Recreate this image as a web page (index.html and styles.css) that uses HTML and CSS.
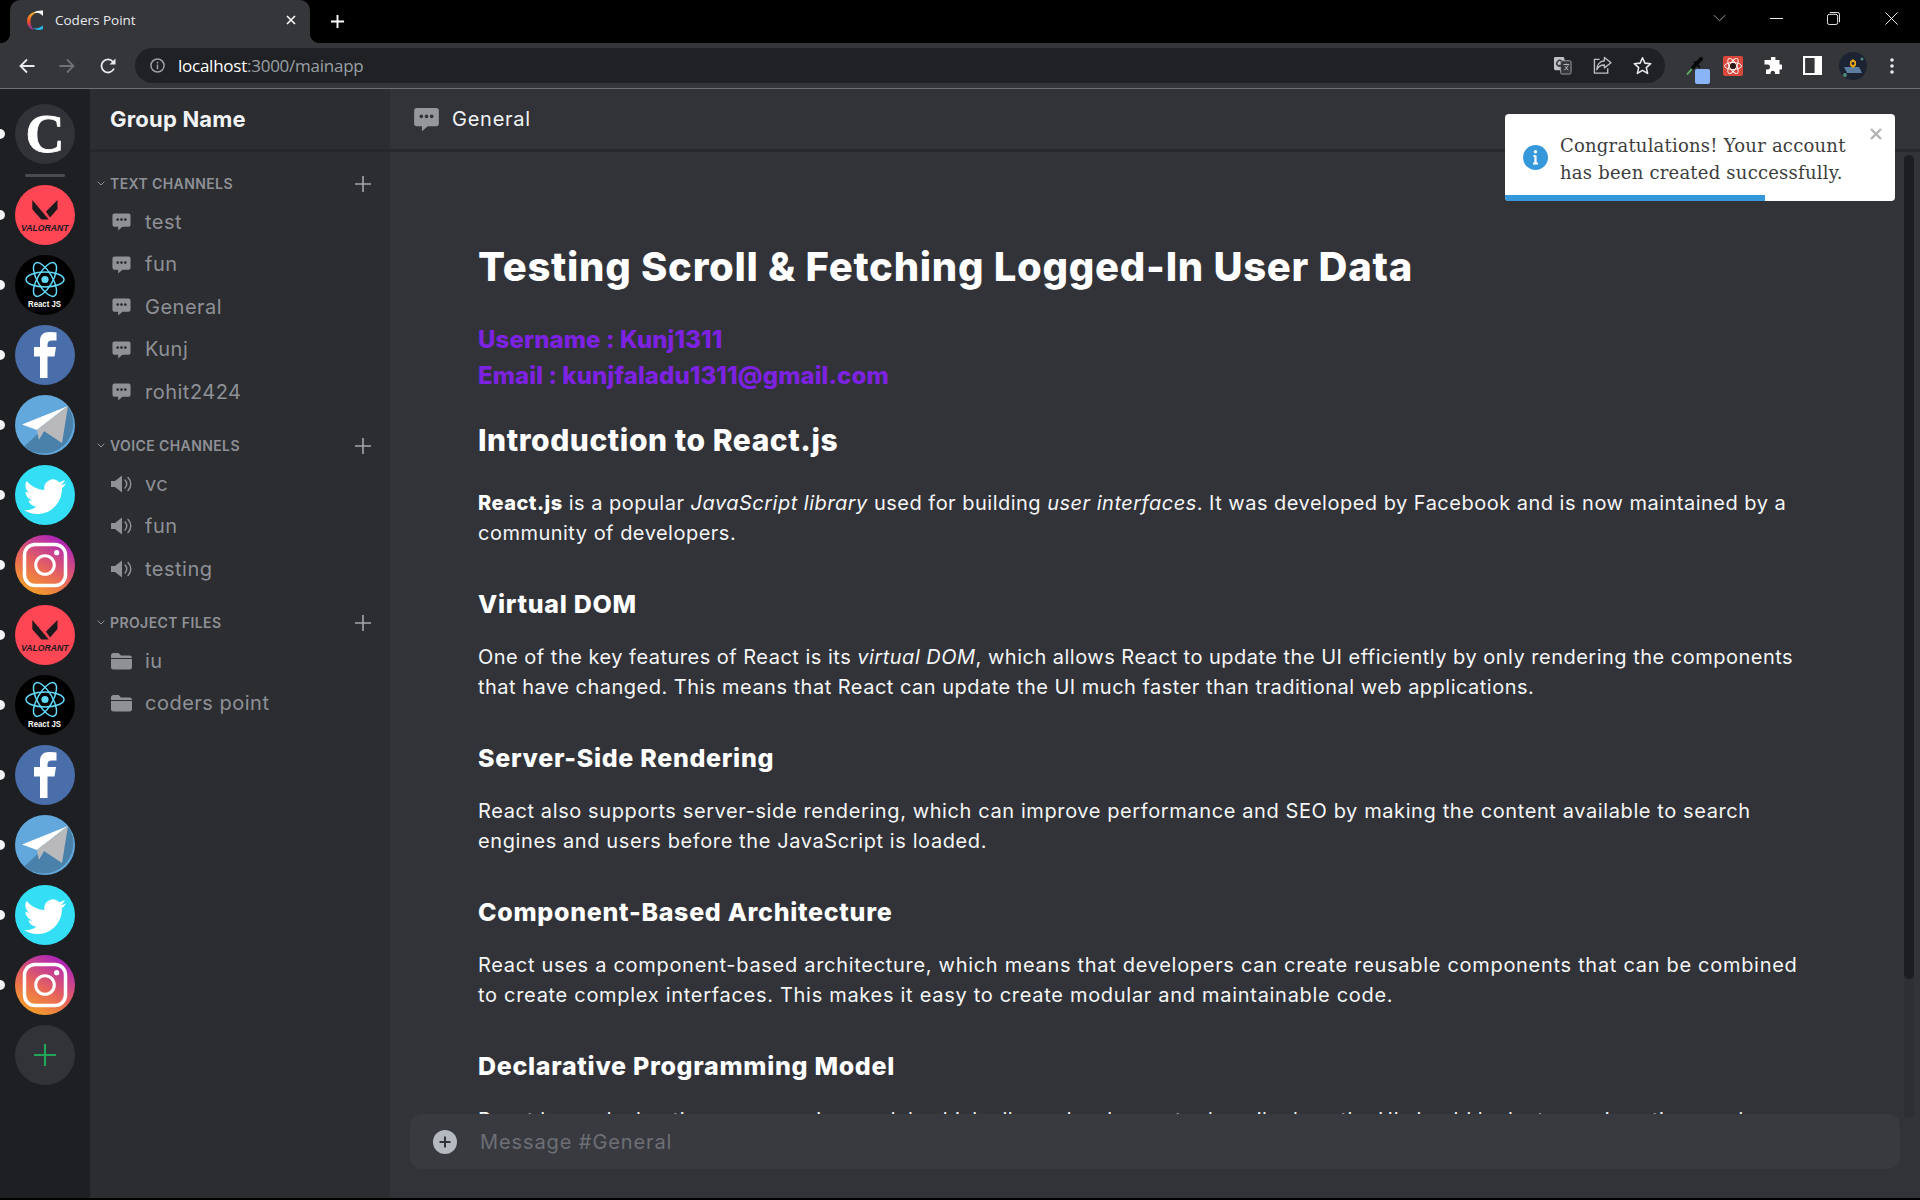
FILE: index.html
```html
<!DOCTYPE html>
<html lang="en">
<head>
<meta charset="utf-8">
<title>Coders Point</title>
<link rel="stylesheet" href="styles.css">
</head>
<body>
<svg class="defs" width="0" height="0" aria-hidden="true">
  <defs>
    <linearGradient id="ig" x1="0.2" y1="1" x2="0.75" y2="0">
      <stop offset="0" stop-color="#f5a623"/><stop offset="0.45" stop-color="#e8655a"/><stop offset="1" stop-color="#a81ec4"/>
    </linearGradient>
    <linearGradient id="fav" x1="0" y1="0" x2="0" y2="1">
      <stop offset="0" stop-color="#f6c22a"/><stop offset="0.55" stop-color="#ea4a26"/><stop offset="1" stop-color="#8a2fc0"/>
    </linearGradient>
    <symbol id="logo-val" viewBox="0 0 60 60">
      <circle cx="30" cy="30" r="30" fill="#ff4655"/>
      <path d="M17.300 15v9.300l9 10.300h7.500zM42.500 15L31 26.500l4 6 7.500-8.500z" fill="#1d1a1e"/>
      <text x="6" y="45.500" class="val-text" textLength="47.500" lengthAdjust="spacingAndGlyphs">VALORANT</text>
    </symbol>
    <symbol id="logo-react" viewBox="0 0 60 60">
      <circle cx="30" cy="30" r="30" fill="#000"/>
      <g fill="none" stroke="#61dafb" stroke-width="1.500">
        <ellipse cx="30" cy="24.500" rx="19" ry="7.500"/>
        <ellipse cx="30" cy="24.500" rx="19" ry="7.500" transform="rotate(60 30 24.500)"/>
        <ellipse cx="30" cy="24.500" rx="19" ry="7.500" transform="rotate(120 30 24.500)"/>
      </g>
      <circle cx="30" cy="24.500" r="3.600" fill="#61dafb"/>
      <text x="13" y="51.500" class="react-text" textLength="33" lengthAdjust="spacingAndGlyphs">React JS</text>
    </symbol>
    <symbol id="logo-fb" viewBox="0 0 60 60">
      <circle cx="30" cy="30" r="30" fill="#4a6ea9"/>
      <path d="M25 53V31.500h-6V22h6v-6c0-6 3.500-9 9-9 2.500 0 5.500.2 7.500.5v8H37c-3 0-4.500 1.200-4.500 4V22H41l-1.500 9.500h-7V53z" fill="#fff"/>
    </symbol>
    <symbol id="logo-tg" viewBox="0 0 60 60">
      <circle cx="30" cy="30" r="30" fill="#62a8dc"/>
      <path d="M53 11.500A30 30 0 0 1 9 51.500z" fill="#4a81aa"/>
      <path d="M7 29.500L53 11 22 35z" fill="#fff"/>
      <path d="M53 11L22 35l2 9.500 5-8.500z" fill="#7db7e2"/>
      <path d="M53 11l-6 37-18-12-5 8.500-2-9.500z" fill="#b9b9bb"/>
    </symbol>
    <symbol id="logo-tw" viewBox="0 0 60 60">
      <circle cx="30" cy="30" r="30" fill="#33dff5"/>
      <path d="M51 18.500c-1.600.7-3.300 1.200-5 1.400 1.800-1.100 3.200-2.800 3.800-4.800-1.700 1-3.500 1.700-5.500 2.100a8.700 8.700 0 0 0-14.800 7.900c-7.200-.4-13.600-3.800-17.900-9-2.300 4-1.200 9 2.700 11.600-1.400 0-2.700-.4-3.900-1.100 0 4.200 3 7.800 7 8.600-1.300.4-2.600.4-3.900.2 1.100 3.500 4.300 6 8.100 6A17.500 17.500 0 0 1 9 45.100a24.700 24.700 0 0 0 13.300 3.900c16.100 0 25.200-13.600 24.600-25.800 1.700-1.200 3.100-2.800 4.100-4.700z" fill="#fff"/>
    </symbol>
    <symbol id="logo-ig" viewBox="0 0 60 60">
      <circle cx="30" cy="30" r="30" fill="url(#ig)"/>
      <rect x="9.500" y="9.500" width="41" height="41" rx="10.500" fill="none" stroke="#fff" stroke-width="3.500"/>
      <circle cx="30" cy="30" r="9.300" fill="none" stroke="#fff" stroke-width="3"/>
      <circle cx="41.700" cy="17.700" r="2.600" fill="#fff"/>
    </symbol>
    <symbol id="i-chat" viewBox="0 0 20 20">
      <path d="M2.500 1.500h15a2 2 0 0 1 2 2v10a2 2 0 0 1-2 2H11l-4.500 4v-4h-4a2 2 0 0 1-2-2v-10a2 2 0 0 1 2-2z" fill="currentColor"/>
      <g class="chat-dots"><circle cx="6" cy="8" r="1.400"/><circle cx="10" cy="8" r="1.400"/><circle cx="14" cy="8" r="1.400"/></g>
    </symbol>
    <symbol id="i-vol" viewBox="0 0 21 18">
      <path d="M0 6h4l7-5.500v17L4 12H0z" fill="currentColor"/>
      <path d="M14 5a5.500 5.500 0 0 1 0 8M17 2.500a9 9 0 0 1 0 13" fill="none" stroke="currentColor" stroke-width="1.500" stroke-linecap="round"/>
    </symbol>
    <symbol id="i-folder" viewBox="0 0 21 17">
      <path d="M0 3a2.500 2.500 0 0 1 2.500-2.500h5L10 3h8.500A2.500 2.500 0 0 1 21 5.500H0z" fill="currentColor"/>
      <path d="M0 6.500h21v8a2.500 2.500 0 0 1-2.500 2.500h-16A2.500 2.500 0 0 1 0 14.500z" fill="currentColor"/>
    </symbol>
    <symbol id="i-plus" viewBox="0 0 16 16">
      <path d="M8 0v16M0 8h16" fill="none" stroke="currentColor" stroke-width="1.600"/>
    </symbol>
    <symbol id="i-chev" viewBox="0 0 8 5">
      <path d="M.7.7L4 4l3.300-3.300" fill="none" stroke="currentColor" stroke-width="1"/>
    </symbol>
  </defs>
</svg>

<header class="browser">
  <div class="tabstrip">
    <div class="tab">
      <svg class="favicon" viewBox="0 0 16 20"><path d="M13 1.500C5 1 0 5 0 11c0 5 3 8 7 9-3-3-3.500-6-3.500-9 0-5 3.500-8.500 9.500-9.500z" fill="url(#fav)"/><path d="M8 1.800C11 .5 14 .5 16 .5V6c-2-2.500-5-4-8.500-3z" fill="#fff"/><path d="M5 17c2 2 6 2 11-1.500V19c-3 1.500-8 1.500-11-2z" fill="#28b5ea"/></svg>
      <span class="tab-title">Coders Point</span>
      <svg class="tab-close" viewBox="0 0 10 10"><path d="M1 1l8 8M9 1l-8 8" stroke="#fff" stroke-width="1.600" fill="none"/></svg>
    </div>
    <svg class="new-tab" viewBox="0 0 16 16"><path d="M8 1v14M1 8h14" stroke="#fff" stroke-width="2" fill="none"/></svg>
    <div class="win-controls">
      <svg class="wc wc-chev" viewBox="0 0 14 8"><path d="M1 1l6 6 6-6" stroke="#a6a6a6" stroke-width="1" fill="none"/></svg>
      <svg class="wc wc-min" viewBox="0 0 14 14"><path d="M0 7h14" stroke="#fff" stroke-width="1" fill="none"/></svg>
      <svg class="wc wc-max" viewBox="0 0 14 14"><rect x=".5" y="2.500" width="11" height="11" rx="2" stroke="#fff" fill="none"/><path d="M3 .5h8.500a2 2 0 0 1 2 2V11" stroke="#fff" fill="none"/></svg>
      <svg class="wc wc-close" viewBox="0 0 14 14"><path d="M.5.5l13 13M13.500.5l-13 13" stroke="#fff" stroke-width="1" fill="none"/></svg>
    </div>
  </div>
  <div class="toolbar">
    <svg class="nav-ico" viewBox="0 0 16 16"><path d="M15.500 8H1.500M8 1.500L1.500 8 8 14.500" stroke="#e8eaed" stroke-width="1.800" fill="none"/></svg>
    <svg class="nav-ico" viewBox="0 0 16 16"><path d="M.5 8h14M8 1.500L14.500 8 8 14.500" stroke="#6f7175" stroke-width="1.800" fill="none"/></svg>
    <svg class="nav-ico reload" viewBox="0 0 16 16"><path d="M14 10.500A6.500 6.500 0 1 1 13 3.800" stroke="#e8eaed" stroke-width="1.800" fill="none"/><path d="M15.500.5v6h-6z" fill="#e8eaed"/></svg>
    <div class="omnibox">
      <svg class="info-ico" viewBox="0 0 16 16"><circle cx="8" cy="8" r="7" stroke="#9aa0a6" stroke-width="1.600" fill="none"/><path d="M8 7v5M8 4v1.800" stroke="#9aa0a6" stroke-width="1.600"/></svg>
      <span class="url"><span class="url-host">localhost</span>:3000/mainapp</span>
      <div class="omni-actions">
        <svg class="omni-ico" viewBox="0 0 20 20"><rect x="1" y="1" width="11" height="14" rx="1.500" fill="#bdc1c6"/><rect x="8" y="5" width="11" height="14" rx="1.500" fill="#35363a" stroke="#9aa0a6"/><path d="M9 5.500A3 3 0 1 0 9 10H6.500" stroke="#35363a" stroke-width="1.500" fill="none"/><path d="M11 9h6M14 8v1M12 15l4-5M13 11l3 4" stroke="#bdc1c6" fill="none"/></svg>
        <svg class="omni-ico" viewBox="0 0 20 20"><path d="M7 3.500H1.500v14.500h14v-5" stroke="#bdc1c6" stroke-width="1.400" fill="none"/><path d="M12 1.500L19 7l-7 5.500V9.500c-4 0-6.500 1.500-8 5 0-5 3-9 8-9.500z" stroke="#bdc1c6" stroke-width="1.400" fill="none" stroke-linejoin="round"/></svg>
        <svg class="omni-ico" viewBox="0 0 20 20"><path d="M10 1.800l2.500 5.700 6.200.6-4.700 4.100 1.400 6.100-5.400-3.200-5.400 3.200 1.400-6.100L1.300 8.100l6.200-.6z" stroke="#e8eaed" stroke-width="1.600" fill="none" stroke-linejoin="round"/></svg>
      </div>
    </div>
    <div class="extensions">
      <svg class="ext-dropper" viewBox="0 0 24 27"><path d="M1 17.500L8 9.500" stroke="#5cb860" stroke-width="1.800" fill="none"/><path d="M7 10.500L15 2" stroke="#08090a" stroke-width="4" fill="none" stroke-linecap="round"/><path d="M8 4.500l6 6" stroke="#08090a" stroke-width="2" fill="none"/><rect x="9" y="12" width="15" height="15" rx="2" fill="#8ab4f8"/></svg>
      <svg class="ext-react" viewBox="0 0 20 20"><rect width="20" height="20" rx="2" fill="#d9483b"/><g stroke="#fff" fill="none" stroke-width=".9"><ellipse cx="10" cy="10" rx="8.500" ry="3.500"/><ellipse cx="10" cy="10" rx="8.500" ry="3.500" transform="rotate(60 10 10)"/><ellipse cx="10" cy="10" rx="8.500" ry="3.500" transform="rotate(120 10 10)"/></g><circle cx="10" cy="10" r="3" fill="#2b1a18"/></svg>
      <svg class="ext-puzzle" viewBox="0 0 18 18"><path d="M7 1a2.200 2.200 0 0 1 4.400 0V3H15.500v4.500h1.500a2.500 2.500 0 0 1 0 5h-1.500V17H11v-1.500a2.300 2.300 0 0 0-4.500 0V17H2v-4.500h1.500a2.500 2.500 0 0 0 0-5H.5V3H7z" fill="#fff"/></svg>
      <svg class="ext-panel" viewBox="0 0 18 18"><path fill-rule="evenodd" d="M0 0h18v18H0zM2 2v14h9V2z" fill="#fff"/></svg>
      <svg class="ext-avatar" viewBox="0 0 28 28"><circle cx="14" cy="14" r="14" fill="#1c2433"/><path d="M5 15h15l3 6H8z" fill="#5a7da0"/><path d="M14 7l3 2.500v4L14 16l-3-2.500v-4z" fill="#e6a817"/><circle cx="14" cy="11.500" r="1.400" fill="#1c2433"/><circle cx="23" cy="7" r="1.500" fill="#4f8a78"/><circle cx="6" cy="23" r="2" fill="#4f8a78"/></svg>
      <svg class="ext-dots" viewBox="0 0 4 16"><circle cx="2" cy="2" r="1.800" fill="#e8eaed"/><circle cx="2" cy="8" r="1.800" fill="#e8eaed"/><circle cx="2" cy="14" r="1.800" fill="#e8eaed"/></svg>
    </div>
  </div>
</header>

<div class="app">
  <nav class="rail">
    <div class="rail-item"><div class="brand-c">C</div></div>
    <div class="rail-sep"></div>
    <div class="rail-item"><svg class="logo"><use href="#logo-val"/></svg></div>
    <div class="rail-item"><svg class="logo"><use href="#logo-react"/></svg></div>
    <div class="rail-item"><svg class="logo"><use href="#logo-fb"/></svg></div>
    <div class="rail-item"><svg class="logo"><use href="#logo-tg"/></svg></div>
    <div class="rail-item"><svg class="logo"><use href="#logo-tw"/></svg></div>
    <div class="rail-item"><svg class="logo"><use href="#logo-ig"/></svg></div>
    <div class="rail-item"><svg class="logo"><use href="#logo-val"/></svg></div>
    <div class="rail-item"><svg class="logo"><use href="#logo-react"/></svg></div>
    <div class="rail-item"><svg class="logo"><use href="#logo-fb"/></svg></div>
    <div class="rail-item"><svg class="logo"><use href="#logo-tg"/></svg></div>
    <div class="rail-item"><svg class="logo"><use href="#logo-tw"/></svg></div>
    <div class="rail-item"><svg class="logo"><use href="#logo-ig"/></svg></div>
    <div class="rail-add"><svg class="rail-add-ico"><use href="#i-plus"/></svg></div>
  </nav>

  <aside class="sidebar">
    <div class="side-head">Group Name</div>
    <section class="cat">
      <div class="cat-head"><svg class="chev"><use href="#i-chev"/></svg><span class="cat-name">TEXT CHANNELS</span><svg class="cat-plus"><use href="#i-plus"/></svg></div>
      <div class="chan"><svg class="chan-ico"><use href="#i-chat"/></svg><span>test</span></div>
      <div class="chan"><svg class="chan-ico"><use href="#i-chat"/></svg><span>fun</span></div>
      <div class="chan"><svg class="chan-ico"><use href="#i-chat"/></svg><span>General</span></div>
      <div class="chan"><svg class="chan-ico"><use href="#i-chat"/></svg><span>Kunj</span></div>
      <div class="chan"><svg class="chan-ico"><use href="#i-chat"/></svg><span>rohit2424</span></div>
    </section>
    <section class="cat">
      <div class="cat-head"><svg class="chev"><use href="#i-chev"/></svg><span class="cat-name">VOICE CHANNELS</span><svg class="cat-plus"><use href="#i-plus"/></svg></div>
      <div class="chan"><svg class="chan-ico vol"><use href="#i-vol"/></svg><span>vc</span></div>
      <div class="chan"><svg class="chan-ico vol"><use href="#i-vol"/></svg><span>fun</span></div>
      <div class="chan"><svg class="chan-ico vol"><use href="#i-vol"/></svg><span>testing</span></div>
    </section>
    <section class="cat">
      <div class="cat-head"><svg class="chev"><use href="#i-chev"/></svg><span class="cat-name">PROJECT FILES</span><svg class="cat-plus"><use href="#i-plus"/></svg></div>
      <div class="chan"><svg class="chan-ico vol"><use href="#i-folder"/></svg><span>iu</span></div>
      <div class="chan"><svg class="chan-ico vol"><use href="#i-folder"/></svg><span>coders point</span></div>
    </section>
  </aside>

  <main class="main">
    <div class="main-head"><svg class="head-ico"><use href="#i-chat"/></svg><span class="head-title">General</span></div>
    <article class="content">
      <h1>Testing Scroll &amp; Fetching Logged-In User Data</h1>
      <div class="who"><div>Username : Kunj1311</div><div>Email : kunjfaladu1311@gmail.com</div></div>
      <h2>Introduction to React.js</h2>
      <p><strong>React.js</strong> is a popular <em>JavaScript library</em> used for building <em>user interfaces</em>. It was developed by Facebook and is now maintained by a<br>community of developers.</p>
      <h3>Virtual DOM</h3>
      <p>One of the key features of React is its <em>virtual DOM</em>, which allows React to update the UI efficiently by only rendering the components<br>that have changed. This means that React can update the UI much faster than traditional web applications.</p>
      <h3>Server-Side Rendering</h3>
      <p class="loose">React also supports server-side rendering, which can improve performance and SEO by making the content available to search<br>engines and users before the JavaScript is loaded.</p>
      <h3>Component-Based Architecture</h3>
      <p class="looser">React uses a component-based architecture, which means that developers can create reusable components that can be combined<br>to create complex interfaces. This makes it easy to create modular and maintainable code.</p>
      <h3>Declarative Programming Model</h3>
      <p>React has a declarative programming model, which allows developers to describe how the UI should look at any given time, and</p>
    </article>
    <div class="scroll-track"><div class="scroll-thumb"></div></div>
    <div class="composer">
      <svg class="composer-ico" viewBox="0 0 24 24"><circle cx="12" cy="12" r="12" fill="#b5bac1"/><path d="M12 6.500v11M6.500 12h11" stroke="#313338" stroke-width="2"/></svg>
      <span class="composer-text">Message #General</span>
    </div>
    <div class="toast">
      <div class="toast-body">
        <svg class="toast-ico" viewBox="0 0 25 25"><circle cx="12.500" cy="12.500" r="12.500" fill="#3498db"/><path d="M12.500 10.500v8M10 18.500h5M10.500 11h2" stroke="#fff" stroke-width="2.200" fill="none"/><circle cx="12.500" cy="6.800" r="1.700" fill="#fff"/></svg>
        <div class="toast-text">Congratulations! Your account has been created successfully.</div>
        <svg class="toast-close" viewBox="0 0 12 12"><path d="M1 1l10 10M11 1L1 11" stroke="#b3b3b3" stroke-width="2.400" fill="none"/></svg>
      </div>
      <div class="toast-bar"><div class="toast-fill"></div></div>
    </div>
  </main>
</div>
</body>
</html>
```

FILE: styles.css
```css
* { box-sizing: border-box; }
html, body { margin: 0; height: 100%; }
body {
  width: 1920px; height: 1200px; overflow: hidden; background: #000;
  display: flex; flex-direction: column;
  font-family: "Inter", "Noto Sans", sans-serif;
}
.defs { position: absolute; }
.val-text { font: italic 700 8.500px "Liberation Sans", sans-serif; fill: #1d1a1e; }
.react-text { font: 700 8.500px "Liberation Sans", sans-serif; fill: #fff; }
.chat-dots { fill: var(--dots, #2b2d31); }

/* browser chrome */
.browser { flex: none; }
.tabstrip { height: 43px; background: #000; display: flex; align-items: flex-start; padding-left: 10px; }
.tab {
  width: 300px; height: 43px; background: #35363a; border-radius: 10px 10px 0 0;
  display: flex; align-items: center; padding: 0 14px 4px 17px; position: relative;
}
.tab::before, .tab::after {
  content: ""; position: absolute; bottom: 0; width: 10px; height: 10px;
}
.tab::before { left: -10px; background: radial-gradient(circle at 0 0, #000 10px, #35363a 10.500px); }
.tab::after { right: -10px; background: radial-gradient(circle at 100% 0, #000 10px, #35363a 10.500px); }
.favicon { width: 16px; height: 20px; flex: none; }
.tab-title { margin-left: 12px; flex: 1; font: 13.500px "Open Sans", sans-serif; color: #e8eaed; }
.tab-close { width: 10px; height: 10px; flex: none; }
.new-tab { width: 15px; height: 15px; margin: 14px 0 0 20px; flex: none; }
.win-controls { margin-left: auto; height: 36px; display: flex; align-items: center; padding-right: 22px; }
.wc { width: 13px; height: 13px; flex: none; }
.wc-chev { margin-right: 44px; height: 8px; }
.wc-min { margin-right: 44px; }
.wc-max { margin-right: 45px; }

.toolbar {
  height: 46px; background: #35363a; border-bottom: 1px solid #6d6e70;
  display: flex; align-items: center; padding: 0 0 0 19px;
}
.nav-ico { width: 16px; height: 16px; flex: none; margin-right: 24px; }
.nav-ico.reload { margin-left: 1px; margin-right: 23px; }
.omnibox {
  width: 1530px; height: 35px; margin-left: -4px; border-radius: 18px; background: #202124;
  display: flex; align-items: center; padding: 0 13px 0 15px; flex: none;
}
.info-ico { width: 15px; height: 15px; flex: none; }
.url { margin-left: 13px; font: 17px "Open Sans", sans-serif; letter-spacing: -.25px; color: #9aa0a6; }
.url-host { color: #fff; }
.omni-actions { margin-left: auto; display: flex; gap: 21px; align-items: center; }
.omni-ico { width: 19px; height: 19px; flex: none; }
.extensions { display: flex; align-items: center; margin-left: 21px; }
.ext-dropper { width: 24px; height: 27px; flex: none; margin-top: 9px; margin-right: 13px; }
.ext-react { width: 20px; height: 20px; flex: none; margin-right: 21px; }
.ext-puzzle { width: 18px; height: 18px; flex: none; margin-right: 21px; }
.ext-panel { width: 19px; height: 19px; flex: none; margin-right: 17px; }
.ext-avatar { width: 28px; height: 28px; flex: none; margin-right: 23px; }
.ext-dots { width: 4px; height: 16px; flex: none; }

/* app */
.app { height: 1109px; display: flex; flex: none; }

.rail {
  width: 90px; flex: none; background: #1e1f22;
  display: flex; flex-direction: column; align-items: center; padding-top: 15px;
}
.rail-item { width: 60px; height: 60px; flex: none; position: relative; margin-bottom: 10px; }
.rail-item::before {
  content: ""; position: absolute; left: -20px; top: 25px; width: 10px; height: 10px;
  border-radius: 50%; background: #f2f3f5;
}
.logo { width: 60px; height: 60px; display: block; }
.brand-c {
  width: 60px; height: 60px; border-radius: 50%; background: #313338; color: #fff;
  display: flex; align-items: center; justify-content: center;
  font: 700 54px/1 "Liberation Serif", serif;
  -webkit-text-stroke: .8px #fff;
}
.rail-sep { width: 40px; height: 3px; background: #4a4b50; border-radius: 2px; flex: none; margin-bottom: 8px; }
.rail-add {
  width: 60px; height: 60px; border-radius: 50%; background: #313338; color: #23a559;
  display: flex; align-items: center; justify-content: center; flex: none;
}
.rail-add-ico { width: 22px; height: 22px; }

.sidebar { width: 300px; flex: none; background: #2b2d31; color: #8f9197; }
.side-head {
  height: 63px; border-bottom: 3px solid #26272b; padding-left: 20px;
  display: flex; align-items: center; font-weight: 700; font-size: 22px; letter-spacing: .2px; color: #f2f3f5;
}
.cat { margin-top: 20.500px; }
.cat:first-of-type { margin-top: 19.500px; }
.cat-head { height: 24px; display: flex; align-items: center; padding-left: 7px; margin-bottom: 5px; }
.chev { width: 8px; height: 5px; flex: none; color: #8f9197; }
.cat-name { margin-left: 5px; font-size: 14px; font-weight: 600; letter-spacing: .4px; color: #8f9197; }
.cat-plus { width: 16px; height: 16px; margin-left: auto; margin-right: 19px; color: #a4a6aa; }
.chan { height: 42.500px; display: flex; align-items: center; padding-left: 22px; font-size: 20px; letter-spacing: .5px; color: #8f9197; }
.chan-ico { width: 19px; height: 19px; flex: none; margin-right: 14px; }
.chan-ico.vol { width: 21px; height: 18px; margin-left: -1px; margin-right: 13px; }

.main { flex: 1; background: #313338; position: relative; display: flex; flex-direction: column; min-width: 0; }
.main-head {
  height: 63px; flex: none; border-bottom: 3px solid #27282c; display: flex; align-items: center; padding-left: 23px;
}
.head-ico { width: 27px; height: 26px; color: #96979b; flex: none; --dots: #313338; }
.head-title { margin-left: 12px; font-size: 20px; letter-spacing: .75px; color: #f2f3f5; }

.content { flex: 1; overflow: hidden; padding: 0 0 0 88px; color: #f5f6f7; min-height: 0; }
.content h1 { margin: 87px 0 0; font-size: 40px; line-height: 56px; font-weight: 800; color: #fff; letter-spacing: .72px; white-space: nowrap; }
.who { margin-top: 27px; font-size: 24px; line-height: 36px; font-weight: 800; letter-spacing: .1px; color: #7e22e2; }
.content h2 { margin: 24px 0 0; font-size: 30px; line-height: 44px; font-weight: 800; letter-spacing: .55px; color: #fff; }
.content h3 { margin: 37px 0 0; font-size: 25px; line-height: 38px; font-weight: 800; letter-spacing: .7px; color: #fff; }
.content p { margin: 19.300px 0 0; font-size: 20px; line-height: 30px; letter-spacing: .49px; white-space: nowrap; }
.content h2 + p { margin-top: 25.500px; }
.content p.loose { letter-spacing: .6px; }
.content p.looser { letter-spacing: .7px; }
.content strong { color: #fff; font-weight: 800; }

.scroll-track { position: absolute; left: 1514px; top: 66px; width: 10px; height: 963px; border-radius: 5px; background: #2e2f34; }
.scroll-thumb { height: 824px; border-radius: 5px; background: #1c1d20; }

.composer {
  flex: none; height: 55px; margin: 0 20px 29px; border-radius: 12px;
  background: #383a40; display: flex; align-items: center; padding-left: 23px;
}
.composer-ico { width: 24px; height: 24px; flex: none; }
.composer-text { margin-left: 23px; font-size: 20px; letter-spacing: .9px; color: #6d6f75; }

.toast {
  position: absolute; left: 1115px; top: 25px; width: 390px; height: 87px; background: #fff; border-radius: 4px;
  overflow: hidden; display: flex; flex-direction: column;
  font-family: "DejaVu Serif", "Liberation Serif", serif;
}
.toast-body { flex: 1; display: flex; align-items: center; padding: 6px 0 0 18px; position: relative; }
.toast-ico { width: 25px; height: 25px; flex: none; }
.toast-text { margin: 3px 0 0 12px; width: 300px; font-size: 18px; line-height: 27px; letter-spacing: .22px; color: #3d3d3d; }
.toast-close { position: absolute; right: 13px; top: 14px; width: 12px; height: 12px; }
.toast-bar { height: 6px; flex: none; }
.toast-fill { width: 260px; height: 6px; background: #3498db; }
```
